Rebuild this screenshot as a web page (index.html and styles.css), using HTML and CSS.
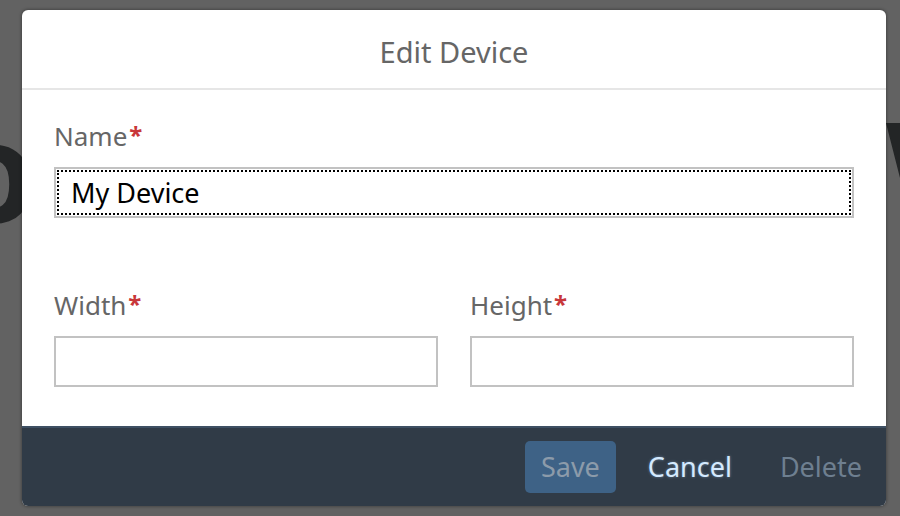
FILE: index.html
```html
<!DOCTYPE html>
<html>
<head>
<meta charset="utf-8">
<link rel="stylesheet" href="styles.css">
</head>
<body>
<div class="page">
  <div class="hero"><span class="hero-l">o</span><span class="hero-r">W</span></div>
</div>
<div class="dialog">
  <div class="dialog-header">Edit Device</div>
  <div class="dialog-content">
    <div class="field">
      <label class="label">Name<span class="req">*</span></label>
      <input class="input focused" type="text" value="My Device">
    </div>
    <div class="row">
      <div class="field">
        <label class="label">Width<span class="req">*</span></label>
        <input class="input" type="text" value="">
      </div>
      <div class="field">
        <label class="label">Height<span class="req">*</span></label>
        <input class="input" type="text" value="">
      </div>
    </div>
  </div>
  <div class="dialog-footer">
    <button class="btn btn-save">Save</button>
    <button class="btn btn-cancel">Cancel</button>
    <button class="btn btn-delete">Delete</button>
  </div>
</div>
</body>
</html>
```
FILE: styles.css
```css
html, body {
  margin: 0;
  padding: 0;
  width: 900px;
  height: 516px;
  overflow: hidden;
  background: #626262;
  font-family: "Noto Sans", "Open Sans", sans-serif;
}

.page {
  padding-top: 99px;
  overflow: hidden;
}

.hero {
  display: flex;
  margin-left: -50px;
  white-space: nowrap;
  font-size: 140px;
  font-weight: 700;
  line-height: 140px;
  color: #232526;
}

.hero-l {
  flex: 0 0 936px;
}

.dialog {
  position: absolute;
  left: 22px;
  top: 10px;
  width: 864px;
  height: 496px;
  background: #fff;
  border-radius: 6px;
  overflow: hidden;
  box-shadow: 0 0 3px 1px rgba(0, 0, 0, 0.28);
  display: flex;
  flex-direction: column;
}

.dialog-header {
  height: 80px;
  box-sizing: border-box;
  padding-top: 26px;
  border-bottom: 2px solid #e6e6e6;
  text-align: center;
  font-size: 29px;
  line-height: 32px;
  color: #666;
}

.dialog-content {
  padding: 30px 32px 0;
  display: flex;
  flex-direction: column;
  gap: 71px;
}

.row {
  display: grid;
  grid-template-columns: 1fr 1fr;
  column-gap: 32px;
}

.field {
  display: flex;
  flex-direction: column;
  gap: 16px;
}

.label {
  font-size: 26px;
  line-height: 30px;
  color: #666;
}

.req {
  color: #c8373a;
  font-weight: 700;
  font-size: 24px;
  margin-left: 2px;
  vertical-align: 2px;
}

.input {
  box-sizing: border-box;
  height: 51px;
  width: 100%;
  margin: 0;
  border: 2px solid #c2c2c2;
  border-radius: 0;
  padding: 0 15px;
  font-family: "Noto Sans", "Open Sans", sans-serif;
  font-size: 27px;
  color: #000;
  background: #fff;
  outline: none;
}

.input.focused {
  outline: 2px dotted #000;
  outline-offset: -5px;
}

.dialog-footer {
  margin-top: auto;
  height: 80px;
  box-sizing: border-box;
  border-top: 2px solid #3e5063;
  background: #303b47;
  display: flex;
  justify-content: flex-end;
  align-items: center;
  gap: 16px;
  padding-right: 8px;
}

.btn {
  height: 52px;
  padding: 0 16px;
  border: none;
  border-radius: 5px;
  background: transparent;
  font-family: "Noto Sans", "Open Sans", sans-serif;
  font-size: 27px;
  line-height: 52px;
}

.btn-save {
  background: #3e6286;
  color: #8c9baa;
}

.btn-cancel {
  color: #d4eaff;
  text-shadow: 0 0 3px rgba(170, 210, 255, 0.45);
}

.btn-delete {
  color: #6e7f90;
}
```
